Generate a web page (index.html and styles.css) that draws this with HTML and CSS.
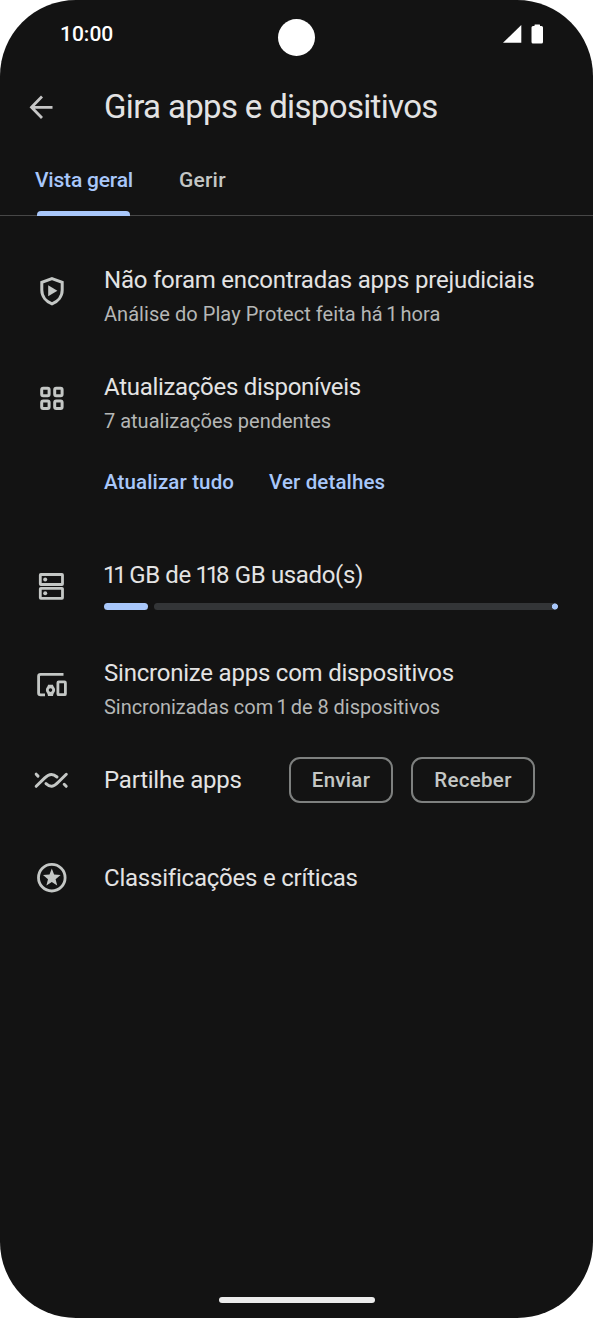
FILE: index.html
```html
<!DOCTYPE html>
<html lang="pt-PT">
<head>
<meta charset="utf-8">
<title>Gira apps e dispositivos</title>
<link rel="stylesheet" href="styles.css">
</head>
<body>
<div class="phone">
  <header class="status">
    <span class="time">10:00</span>
    <span class="camera"></span>
    <svg class="indicators" width="42" height="22" viewBox="0 0 42 22" fill="#fff"><path d="M0 19.800 18.300 2v17.800z"/><path d="M32 1.500h4.500q.5 0 .5.6V3h1.500q1.500 0 1.500 1.500v14.500q0 1.500-1.500 1.500h-8.500q-1.500 0-1.500-1.500V4.500q0-1.500 1.500-1.500h1.500v-.9q0-.6.5-.6z"/></svg>
  </header>
  <div class="appbar">
    <svg class="back" width="24" height="24" viewBox="0 0 24 24" fill="none" stroke="#c6c6c6" stroke-width="2.800"><path d="M23.500 12.300H2.800M13 1.600 2.500 12.300 13 23"/></svg>
    <h1 class="title">Gira apps e dispositivos</h1>
  </div>
  <nav class="tabs">
    <a class="tab active"><span class="t-overview">Vista geral</span></a>
    <a class="tab"><span class="t-manage">Gerir</span></a>
  </nav>
  <main class="list">
    <section class="row protect">
      <svg class="icon" viewBox="0 0 36 36"><path class="line" d="M18 5.600 28.200 9.400V17c0 6.500-4.400 11.600-10.200 13.800C12.200 28.600 7.800 23.500 7.800 17V9.400z"/><path class="solid" d="M14.200 12.200v11l9.200-5.500z"/></svg>
      <div class="body"><h2 class="name n-protect">Não foram encontradas apps prejudiciais</h2><p class="sub s-protect">Análise do Play Protect feita há <span class="one">1</span> hora</p></div>
    </section>
    <section class="row updates">
      <svg class="icon" viewBox="0 0 36 36"><g class="line"><rect x="7.700" y="8.300" width="7.400" height="7.400" rx="1.500"/><rect x="20.700" y="8.300" width="7.400" height="7.400" rx="1.500"/><rect x="7.700" y="21.100" width="7.400" height="7.400" rx="1.500"/><rect x="20.700" y="21.100" width="7.400" height="7.400" rx="1.500"/></g></svg>
      <div class="body">
        <h2 class="name n-updates">Atualizações disponíveis</h2><p class="sub s-updates">7 atualizações pendentes</p>
        <div class="actions"><a class="l-all">Atualizar tudo</a><a class="l-details">Ver detalhes</a></div>
      </div>
    </section>
    <section class="row storage">
      <svg class="icon" viewBox="0 0 36 36"><g class="line thin"><rect x="6.300" y="6.500" width="22.200" height="10" rx=".5"/><rect x="6.300" y="20.300" width="22.200" height="10" rx=".5"/></g><g class="solid"><circle cx="11.200" cy="11.500" r="2"/><circle cx="11.200" cy="25.300" r="2"/></g></svg>
      <div class="body"><h2 class="name n-storage"><span class="ones">11</span> GB de <span class="ones">11</span>8 GB usado(s)</h2><div class="meter"><span class="used"></span><span class="free"></span></div></div>
    </section>
    <section class="row sync">
      <svg class="icon" viewBox="0 0 36 36"><g class="line thin"><path d="M29.500 8.300H6.500q-1.900 0-1.900 1.900V27q0 1.800 1.900 1.800H11"/><rect x="23.900" y="15.900" width="7.500" height="12.800" rx=".8"/><circle cx="16.500" cy="24.100" r="3.200"/></g><path class="solid" d="M14 18.700h5l.6 2.600h-6.200zM13.400 27h6.200l-.6 3.100h-5z"/></svg>
      <div class="body"><h2 class="name n-sync">Sincronize apps com dispositivos</h2><p class="sub s-sync">Sincronizadas com <span class="one">1</span> de 8 dispositivos</p></div>
    </section>
    <section class="row share">
      <svg class="icon" viewBox="0 0 36 36"><path class="line round" d="M2.200 24.300 10.800 15.900C15.500 11.300 19 11.500 23 15M32.300 12.300 24.200 20.300C19.700 25.200 16 25.300 12 21.600M2.200 12.200 4 14.100M30.200 22.300 32.200 24.300"/></svg>
      <div class="body"><h2 class="name n-share">Partilhe apps</h2></div>
      <button class="send"><span>Enviar</span></button><button class="receive"><span>Receber</span></button>
    </section>
    <section class="row reviews">
      <svg class="icon" viewBox="0 0 36 36"><circle class="line thin" cx="17.800" cy="17.700" r="13.300"/><path class="solid" d="m17.800 8.500 2.300 6.100 6.500.4-5 4.200 1.600 6.300-5.400-3.500-5.400 3.500 1.600-6.300-5-4.200 6.500-.4z"/></svg>
      <div class="body"><h2 class="name n-reviews">Classificações e críticas</h2></div>
    </section>
  </main>
  <footer class="gesture"><span class="pill"></span></footer>
</div>
</body>
</html>
```
FILE: styles.css
```css
* { box-sizing: border-box; }
body { margin: 0; background: #fff; font-family: Roboto, "Noto Sans", sans-serif; }
h1, h2, p { margin: 0; font-weight: 400; white-space: nowrap; }
.phone { width: 593px; height: 1318px; background: #131313; border-radius: 76px; overflow: hidden; display: flex; flex-direction: column; }
.status { height: 70px; display: grid; grid-template-columns: 1fr 37px 1fr; align-items: start; }
.time { padding: 21px 0 0 60px; font-size: 21px; line-height: 26px; font-weight: 500; color: #fff; }
.camera { width: 37px; height: 37px; margin-top: 19px; border-radius: 50%; background: #fff; }
.indicators { justify-self: end; margin: 23px 48px 0 0; }
.appbar { height: 74px; display: flex; align-items: center; padding-left: 29px; }
.title { margin-left: 51px; font-size: 33px; line-height: 40px; letter-spacing: -.66px; color: #e3e3e3; }
.tabs { height: 72px; display: flex; gap: 46px; padding-left: 35px; border-bottom: 1px solid #474747; font-size: 21px; font-weight: 500; color: #c4c7c5; }
.tab { position: relative; line-height: 72px; white-space: nowrap; }
.t-overview { letter-spacing: -.2px; }
.t-manage { letter-spacing: .2px; }
.active { color: #a8c7fa; width: 98px; }
.active::after { content: ""; position: absolute; left: 2px; right: 3px; bottom: -1px; height: 5px; border-radius: 4px 4px 0 0; background: #a8c7fa; }
.list { flex: 1; padding-top: 47px; }
.row { display: flex; padding-left: 34px; }
.icon { width: 36px; height: 36px; flex: none; margin: 10px 34px 0 0; fill: none; }
.line { fill: none; stroke: #c4c7c5; stroke-width: 3; }
.thin { stroke-width: 2.800; }
.round { stroke-linecap: round; }
.solid { fill: #c4c7c5; }
.name { font-size: 24px; line-height: 34px; letter-spacing: -.22px; color: #e3e3e3; }
.n-updates { letter-spacing: -.3px; }
.n-storage { letter-spacing: -.36px; }
.ones { letter-spacing: -3.200px; margin-left: -1px; }
.sub { font-size: 20px; line-height: 34px; color: #b5b7b6; }
.s-protect { letter-spacing: .05px; }
.s-sync { letter-spacing: -.04px; }
.one { letter-spacing: -2px; margin-left: -1.500px; }
.updates { margin-top: 39px; }
.actions { display: flex; margin-top: 27px; font-size: 20.500px; line-height: 34px; font-weight: 500; letter-spacing: .13px; color: #a8c7fa; white-space: nowrap; }
.l-all { width: 165px; }
.storage { margin-top: 59px; }
.meter { display: flex; gap: 6px; margin-top: 11px; height: 7px; width: 454px; }
.used { width: 44px; border-radius: 4px; background: #a8c7fa; }
.free { flex: 1; border-radius: 4px; background: radial-gradient(circle at calc(100% - 3px) 50%, #a8c7fa 2.700px, #333537 3.400px); }
.sync { margin-top: 46px; }
.share { margin-top: 33px; height: 46px; align-items: center; }
.share .icon, .reviews .icon { margin-top: 0; }
.share .body { width: 185px; }
button { height: 46px; padding: 0; background: none; border: 2px solid #7e807f; border-radius: 11px; font: 500 20.500px Roboto, sans-serif; letter-spacing: .3px; color: #c4c7c5; }
.send { width: 104px; }
.receive { width: 124px; margin-left: 18px; }
.reviews { margin-top: 57px; height: 36px; align-items: center; }
.gesture { height: 21px; display: flex; justify-content: center; align-items: start; }
.pill { width: 156px; height: 6px; border-radius: 3px; background: #ececec; }
```
